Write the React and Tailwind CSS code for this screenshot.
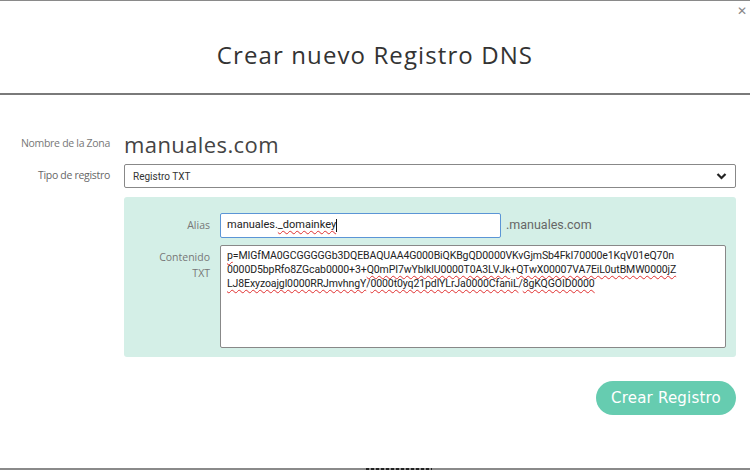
import React from 'react';

const squiggle = 'underline decoration-wavy decoration-[#e03030] decoration-1 underline-offset-2';

const App = () => {
  return (
    <div className="w-[750px] h-[471px] bg-white overflow-hidden flex flex-col border-t border-[#8a8a8a] font-['Open_Sans',sans-serif]">
      {/* Header */}
      <div className="relative h-[94px] flex items-center justify-center border-b-2 border-[#7a7a7a]">
        <h1 className="text-[24px] text-[#333] tracking-[1.1px] font-['Open_Sans',sans-serif] pt-[15px]">
          Crear nuevo Registro DNS
        </h1>
        <span className="absolute right-[3px] top-[1px] text-[12px] text-[#888] font-['DejaVu_Sans',sans-serif]">✕</span>
      </div>

      {/* Body */}
      <div className="flex flex-col pt-[35px] pr-[14px]">
        <div className="flex items-center h-[28px]">
          <div className="w-[110px] text-right text-[10.5px] text-[#777] font-['Open_Sans',sans-serif] tracking-[-0.3px]">Nombre de la Zona</div>
          <div className="pl-[14px] text-[22px] text-[#444] leading-none tracking-[0.4px]">manuales.com</div>
        </div>

        <div className="flex items-center mt-[6px]">
          <div className="w-[110px] text-right text-[10.5px] text-[#666] font-['Open_Sans',sans-serif] tracking-[-0.3px]">Tipo de registro</div>
          <div className="ml-[14px] flex-1 h-[24px] border border-[#888] rounded-[2px] flex items-center justify-between px-[8px]">
            <span className="text-[10px] text-[#333] font-['Roboto',sans-serif]">Registro TXT</span>
            <svg width="11" height="8" viewBox="0 0 11 8">
              <path d="M1.5 2 L5.5 6 L9.5 2" fill="none" stroke="#222" strokeWidth="2.2" />
            </svg>
          </div>
        </div>

        <div className="ml-[124px] mt-[9px] bg-[#d4efe7] rounded-[3px] pt-[16px] pb-[9px] pr-[10px] flex flex-col gap-[7px]">
          <div className="flex items-center">
            <div className="w-[86px] text-right text-[10.5px] text-[#777] font-['Open_Sans',sans-serif]">Alias</div>
            <div className="ml-[10px] w-[281px] h-[25px] bg-white border border-[#5b95d6] rounded-[2px] flex items-center px-[6px] text-[11px] text-[#222] font-['Roboto',sans-serif]">
              <span>manuales.</span>
              <span className={squiggle}>_domainkey</span>
              <span className="w-px h-[13px] bg-[#111]"></span>
            </div>
            <span className="ml-[5px] text-[12.5px] text-[#666] font-['Roboto',sans-serif]">.manuales.com</span>
          </div>

          <div className="flex items-start">
            <div className="w-[86px] text-right text-[10.5px] text-[#777] leading-[16px] pt-[4px] font-['Open_Sans',sans-serif]">
              Contenido<br />TXT
            </div>
            <div className="ml-[10px] flex-1 h-[103px] bg-white border border-[#888] rounded-[2px] px-[6px] pt-[3px] text-[10.5px] leading-[14px] text-[#222] font-['Roboto',sans-serif] tracking-[-0.1px]">
              <div><span className={squiggle}>p</span>=MIGfMA0GCGGGGGb3DQEBAQUAA4G000BiQKBgQD0000VKvGjmSb4FkI70000e1KqV01eQ70n</div>
              <div>0000D5bpRfo8ZGcab0000+3+<span className={squiggle}>Q0mPI7wYblklU0000T0A3LVJk</span>+<span className={squiggle}>QTwX00007VA7EiL0utBMW0000jZ</span></div>
              <div><span className={squiggle}>LJ8Exyzoajgl0000RRJmvhngY</span>/<span className={squiggle}>0000t0yq21pdlYLrJa0000CfaniL</span>/<span className={squiggle}>8gKQGOID0000</span></div>
            </div>
          </div>
        </div>

        <div className="flex justify-end mt-[24px]">
          <button className="w-[140px] h-[34px] rounded-full bg-[#66ccb0] text-white text-[15px] font-['DejaVu_Sans',sans-serif] tracking-[0.2px]">
            Crear Registro
          </button>
        </div>
      </div>

      <div className="flex-1" />
      <div className="h-[2px] bg-[#8a8a8a] mb-[1px] relative">
        <div className="absolute left-[366px] top-0 w-[66px] h-[2px] bg-[repeating-linear-gradient(90deg,#222_0,#222_3px,transparent_3px,transparent_5px)]" />
      </div>
    </div>
  );
};

export default App;
